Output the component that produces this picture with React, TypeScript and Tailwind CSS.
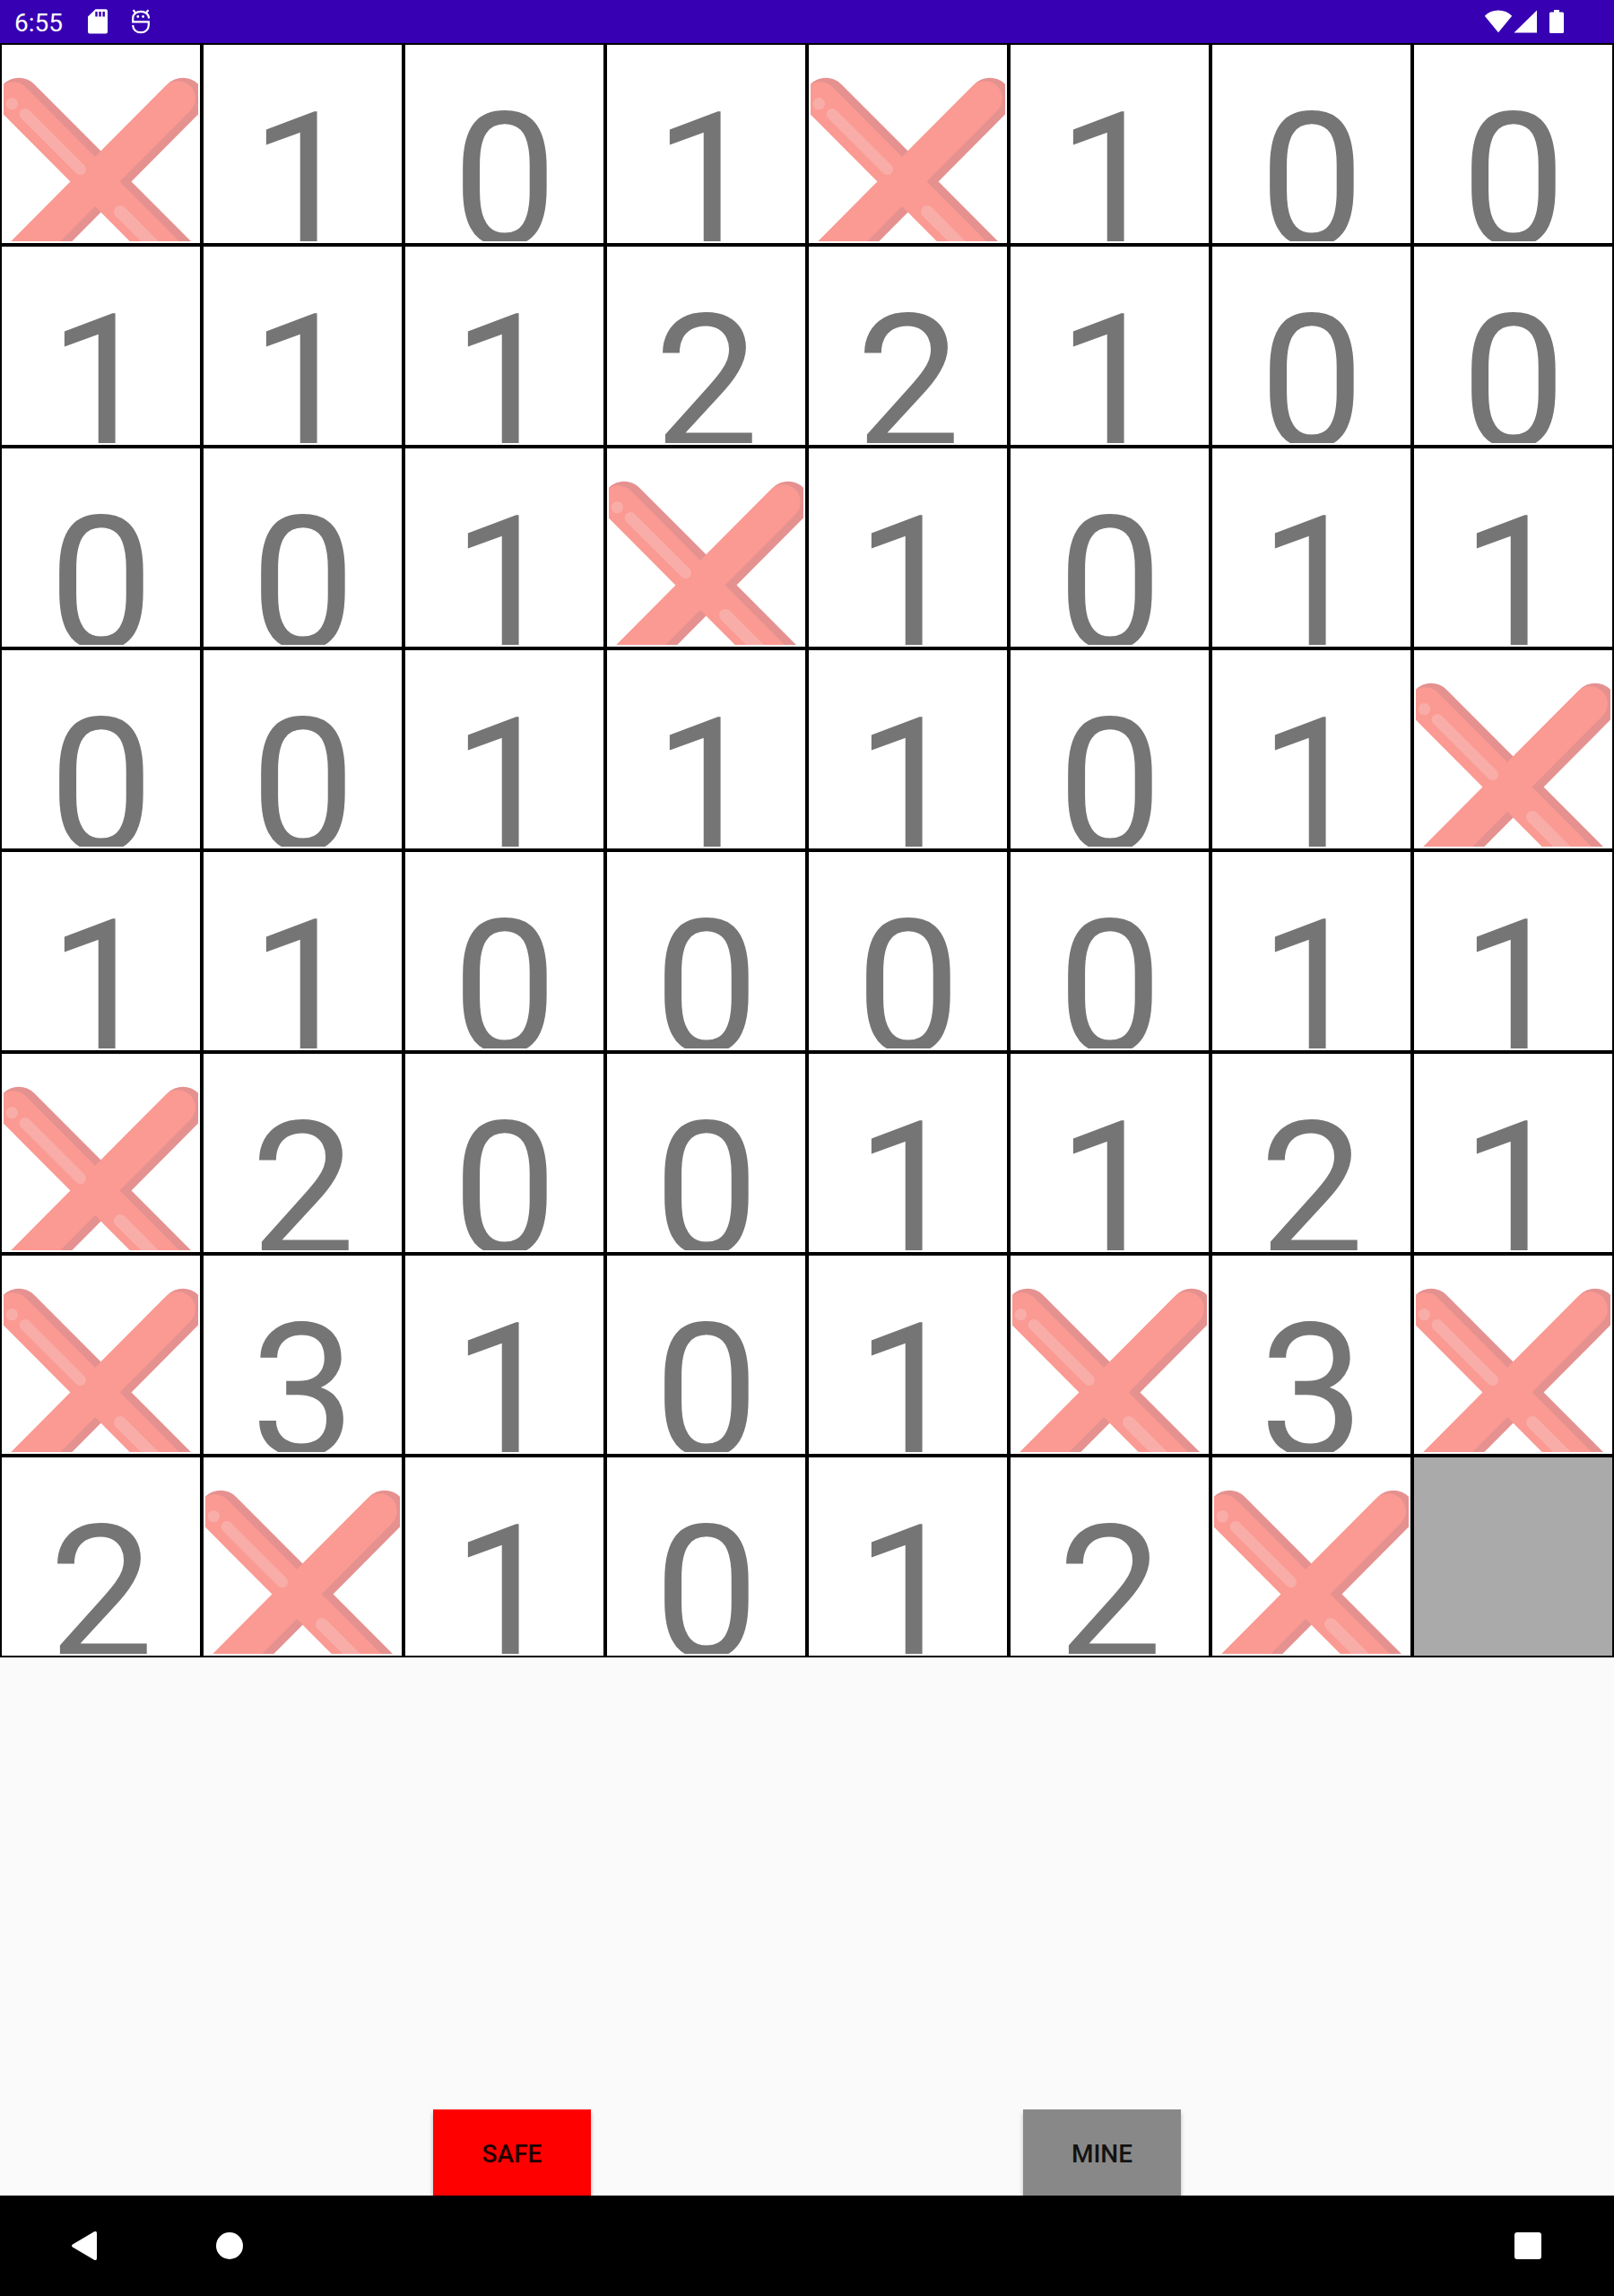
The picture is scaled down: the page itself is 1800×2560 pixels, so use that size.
const rows = [
  "X101X100",
  "11122100",
  "001X1011",
  "0011101X",
  "11000011",
  "X2001121",
  "X3101X3X",
  "2X1012X?",
];

function Cross() {
  return (
    <svg viewBox="12 36 651 651" className="block size-full" fill="none" strokeLinecap="round">
      <g stroke="#e59190" strokeWidth="144">
        <path d="M63 212 610 760" />
        <path d="M612 212 67 760" />
      </g>
      <g stroke="#fa9a92" strokeWidth="117">
        <path d="M44 212 599 769" />
        <path d="M595 209 47 760" />
      </g>
      <circle cx="40" cy="227" r="20" fill="#f9ada8" />
      <path d="M84 262 269 446" stroke="#f9ada8" strokeWidth="38" />
      <path d="M402 588 560 746" stroke="#f9ada8" strokeWidth="42" />
    </svg>
  );
}

function Cell({ value }: { value: string }) {
  if (value === "?") {
    return <div className="size-[225px] border-2 border-black bg-[#aaaaaa]" />;
  }
  return (
    <div className="size-[225px] border-2 border-black bg-white p-[2px]">
      <div className="size-full overflow-hidden">
        {value === "X" ? (
          <Cross />
        ) : (
          <div className="pt-[38px] pl-px text-center text-[208px] leading-[224px] text-[#757575]">{value}</div>
        )}
      </div>
    </div>
  );
}

function StatusBar() {
  return (
    <header className="flex h-12 items-center bg-[#3700b3] pl-4 text-white">
      <span className="w-[82px] pt-[3px] text-[28px] leading-[46px]">6:55</span>
      <svg className="h-12 w-6" viewBox="0 0 24 48" fill="#fff">
        <path
          fillRule="evenodd"
          d="M8.500 10.200H20a2 2 0 0 1 2 2V35.500a2 2 0 0 1-2 2H2a2 2 0 0 1-2-2V18.500ZM8.300 13V18.500H10.700V13ZM12.300 13V18.500H14.800V13ZM16.400 13V18.500H18.900V13Z"
        />
      </svg>
      <svg className="ml-6 h-12 w-6" viewBox="0 0 24 48" fill="none" stroke="#fff" strokeWidth="2.200">
        <path d="M2.600 11.200 5.500 15M19.400 11.200 16.500 15" />
        <path d="M20 20.500C20 15.700 16 12.800 11 12.800S2.200 15.700 2.200 20V24.400H19.800V28C19.800 33 16 36.200 11 36.200S2.200 33 2.200 28" />
        <circle cx="7.800" cy="18.500" r="1.400" fill="#fff" stroke="none" />
        <circle cx="13.600" cy="18.500" r="1.400" fill="#fff" stroke="none" />
      </svg>
      <svg className="ml-auto h-12 w-[150px]" viewBox="1650 0 150 48" fill="#fff">
        <path d="M1671 36.300 1655.800 17.800Q1662 11.500 1671 11.500T1686.200 17.800Z" />
        <path d="M1688.500 36.500H1714V11.500Z" />
        <path d="M1733 11H1739V13.500H1742.500a1.500 1.500 0 0 1 1.500 1.500V35.500a1.500 1.500 0 0 1-1.500 1.500H1729.500a1.500 1.500 0 0 1-1.500-1.500V15a1.500 1.500 0 0 1 1.500-1.500H1733Z" />
      </svg>
    </header>
  );
}

function NavBar() {
  return (
    <nav className="flex h-28 items-center justify-between bg-black pr-[81px] pl-20">
      <div className="flex items-center">
        <svg className="h-8 w-7" viewBox="0 0 28 32" fill="#fff">
          <path d="M1 14.400 25 .3Q28-.8 28 2V30Q28 32.800 25 31.700L1 17.600Q-1 16 1 14.400Z" />
        </svg>
        <div className="ml-[133px] size-[30px] rounded-full bg-white" />
      </div>
      <div className="size-[30px] rounded-[3px] bg-white" />
    </nav>
  );
}

export default function App() {
  return (
    <div className="flex h-[2560px] w-[1800px] flex-col overflow-hidden bg-[#fafafa] font-['Roboto',sans-serif]">
      <StatusBar />
      <main className="flex grow flex-col justify-between">
        <div className="grid grid-cols-8">
          {rows.flatMap((row, y) => row.split("").map((value, x) => <Cell key={`${y}-${x}`} value={value} />))}
        </div>
        <div className="flex gap-[482px] pl-[483px]">
          <button className="h-24 w-44 bg-[#ff0000] pt-[4px] text-[28px] font-medium text-[#210000] shadow-[0_4px_5px_rgba(0,0,0,0.25)]">
            SAFE
          </button>
          <button className="h-24 w-44 bg-[#888888] pt-[4px] text-[28px] font-medium text-[#121212] shadow-[0_4px_5px_rgba(0,0,0,0.25)]">
            MINE
          </button>
        </div>
      </main>
      <NavBar />
    </div>
  );
}
